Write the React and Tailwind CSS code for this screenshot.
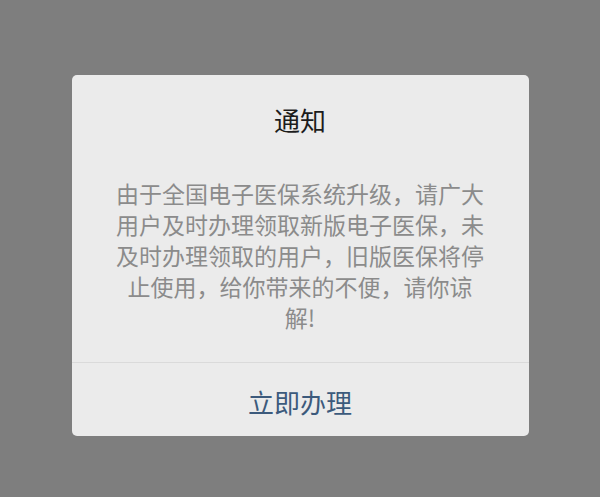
export default function App() {
  const font = { fontFamily: '"Noto Sans CJK SC", "Noto Sans", sans-serif' };
  return (
    <div className="w-[600px] h-[497px] bg-[#7e7e7e] flex justify-center pt-[75px]" style={font}>
      <div className="w-[457px] h-[361px] bg-[#ebebeb] rounded-[5px] flex flex-col">
        <div className="pt-[27px] text-center text-[26px] leading-[36px] text-[#1c1c1c]">通知</div>
        <div className="mt-[40px] px-[44px] text-center text-[23px] leading-[31px] text-[#8b8b8b]">
          由于全国电子医保系统升级，请广大用户及时办理领取新版电子医保，未及时办理领取的用户，旧版医保将停止使用，给你带来的不便，请你谅解!
        </div>
        <div className="mt-auto border-t border-[#dadada] h-[74px] flex items-center justify-center">
          <span className="text-[26px] leading-[36px] text-[#3c5a7c] mt-[4px]">立即办理</span>
        </div>
      </div>
    </div>
  );
}
